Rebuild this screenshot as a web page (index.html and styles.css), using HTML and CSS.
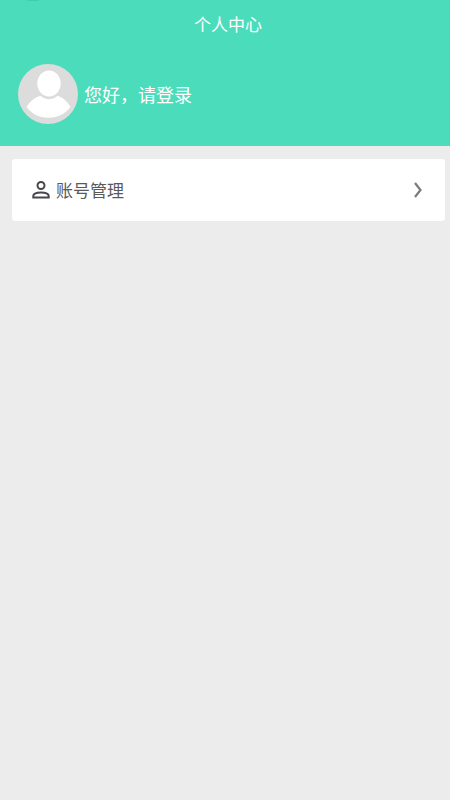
FILE: index.html
```html
<!DOCTYPE html>
<html lang="zh-CN">
<head>
<meta charset="utf-8">
<meta name="viewport" content="width=device-width, initial-scale=1">
<title>个人中心</title>
<link rel="stylesheet" href="styles.css">
</head>
<body>
<header class="header">
  <span class="notch" aria-hidden="true"></span>
  <h1 class="title">个人中心</h1>
  <a class="profile" href="#login">
    <svg class="avatar" viewBox="0 0 60 60" aria-hidden="true">
      <circle cx="30" cy="30" r="30" fill="#dcdcdc"/>
      <path d="M8.500 43C12 37.500 16.500 33.500 22.500 31.800C27 36.300 35 36.300 39.500 31.800C45 33.500 49.500 37.500 52.500 43C47 50 40 53.700 30.500 53.700C21 53.700 14 50 8.500 43Z" fill="#fff"/>
      <ellipse cx="31" cy="19.500" rx="11.700" ry="13" fill="#fff"/>
    </svg>
    <span>您好，请登录</span>
  </a>
</header>
<main class="content">
  <a class="item" href="#account">
    <svg class="item-icon" viewBox="0 0 18 18" fill="none" stroke="#47474b" stroke-width="2" aria-hidden="true">
      <circle cx="9" cy="4.500" r="3.500"/>
      <path d="M1.300 16.500V15C1.300 12.800 5 11.500 9 11.500S16.700 12.800 16.700 15V16.500Z"/>
    </svg>
    <span class="item-label">账号管理</span>
    <svg class="arrow" viewBox="0 0 8 16" fill="none" stroke="#7b7b7b" stroke-width="2.200" aria-hidden="true">
      <path d="M1 1L6.500 8L1 15"/>
    </svg>
  </a>
</main>
</body>
</html>
```
FILE: styles.css
```css
* {
  box-sizing: border-box;
}

body {
  margin: 0;
  min-height: 100vh;
  background: #ececec;
  font-family: "Noto Sans CJK SC", sans-serif;
}

a {
  color: inherit;
  text-decoration: none;
}

.header {
  position: relative;
  padding: 12px 0 22px;
  background: #4bddbb;
  color: #fff;
}

.notch {
  position: absolute;
  top: 0;
  left: 27px;
  width: 12px;
  height: 1px;
  border-radius: 0 0 4px 4px;
  background: #3fcfad;
}

.title {
  margin: 0;
  padding-left: 6px;
  font-size: 17px;
  font-weight: 400;
  line-height: 24px;
  text-align: center;
}

.profile {
  display: flex;
  align-items: center;
  gap: 6px;
  margin-top: 28px;
  padding: 0 18px;
  font-size: 18px;
  line-height: 24px;
}

.avatar {
  width: 60px;
  height: 60px;
}

.content {
  padding: 13px 5px 0 12px;
}

.item {
  display: flex;
  align-items: center;
  padding: 19px 23px 19px 20px;
  border-radius: 3px;
  background: #fff;
  color: #5a5a5a;
  font-size: 17px;
  line-height: 24px;
}

.item-icon {
  width: 18px;
  height: 18px;
  margin-right: 6px;
}

.item-label {
  flex: 1;
}

.arrow {
  width: 8px;
  height: 16px;
}
```
